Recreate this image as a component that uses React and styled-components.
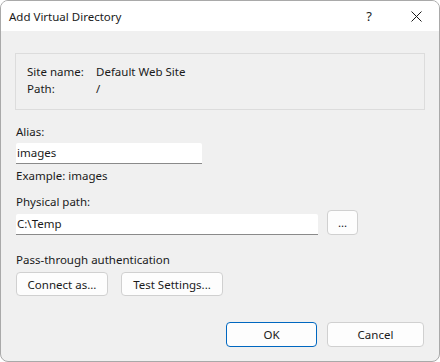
import React from 'react';
import styled, { createGlobalStyle } from 'styled-components';

const Global = createGlobalStyle`
  html, body {
    margin: 0;
    padding: 0;
    background: #ffffff;
  }
  * {
    box-sizing: border-box;
  }
`;

function App() {
  return (
    <>
      <Global />
      <Dialog>
        <TitleBar>
          <Title>Add Virtual Directory</Title>
          <Help>?</Help>
          <CloseBtn>
            <svg width="11" height="11" viewBox="0 0 11 11">
              <path d="M0.5 0.5 L10.5 10.5 M10.5 0.5 L0.5 10.5" stroke="#1a1a1a" strokeWidth="1" fill="none" />
            </svg>
          </CloseBtn>
        </TitleBar>
        <Body>
          <InfoBox>
            <InfoRow>
              <InfoKey>Site name:</InfoKey>
              <span>Default Web Site</span>
            </InfoRow>
            <InfoRow>
              <InfoKey>Path:</InfoKey>
              <span>/</span>
            </InfoRow>
          </InfoBox>

          <Label $top={13}>Alias:</Label>
          <TextBox $width={186} defaultValue="images" />
          <Label $top={3}>Example: images</Label>

          <Label $top={9}>Physical path:</Label>
          <PathRow>
            <TextBox $width={302} defaultValue="C:\Temp" />
            <Button $width={31} $height={25}>...</Button>
          </PathRow>

          <Label $top={16}>Pass-through authentication</Label>
          <ButtonRow>
            <Button $width={92}>Connect as...</Button>
            <Button $width={102}>Test Settings...</Button>
          </ButtonRow>

          <Footer>
            <Button $width={91} $height={25} $primary>OK</Button>
            <Button $width={97} $height={25}>Cancel</Button>
          </Footer>
        </Body>
      </Dialog>
    </>
  );
}

export default App;

const Dialog = styled.div`
  width: 440px;
  height: 362px;
  border: 1px solid #a9a9a9;
  border-radius: 8px;
  overflow: hidden;
  background: #f0f0f0;
  display: flex;
  flex-direction: column;
  font-family: 'Segoe UI', 'Noto Sans', sans-serif;
  font-size: 11.5px;
  color: #1a1a1a;
`;

const TitleBar = styled.div`
  height: 30px;
  background: #ffffff;
  display: flex;
  align-items: center;
  padding: 0 0 0 8px;
`;

const Title = styled.div`
  flex: 1;
  color: #1a1a1a;
`;

const Help = styled.div`
  width: 46px;
  text-align: center;
  font-size: 13px;
  margin-left: 2px;
`;

const CloseBtn = styled.div`
  width: 46px;
  display: flex;
  justify-content: center;
  align-items: center;
  margin-left: 1px;
`;

const Body = styled.div`
  flex: 1;
  padding: 22px 15px 0 15px;
  display: flex;
  flex-direction: column;
  align-items: flex-start;
`;

const InfoBox = styled.div`
  align-self: stretch;
  margin: 0 -1px;
  height: 57px;
  border: 1px solid #dcdcdc;
  padding: 9px 11px;
`;

const InfoRow = styled.div`
  display: flex;
  line-height: 17px;
`;

const InfoKey = styled.span`
  width: 69px;
`;

const Label = styled.div`
  margin-top: ${(p) => p.$top}px;
  line-height: 17px;
`;

const TextBox = styled.input`
  width: ${(p) => p.$width}px;
  height: 21px;
  margin-top: 3px;
  border: none;
  border-bottom: 1px solid #8a8a8a;
  border-radius: 2px 2px 0 0;
  background: #ffffff;
  padding: 0 1px 1px;
  font-family: inherit;
  font-size: 11.5px;
  color: #1a1a1a;
  outline: none;
`;

const PathRow = styled.div`
  display: flex;
  align-items: center;
  gap: 9px;
`;

const ButtonRow = styled.div`
  display: flex;
  gap: 13px;
  margin-top: 4px;
`;

const Footer = styled.div`
  align-self: flex-end;
  display: flex;
  gap: 10px;
  margin-top: 26px;
`;

const Button = styled.button`
  width: ${(p) => p.$width}px;
  height: ${(p) => p.$height || 24}px;
  background: #fdfdfd;
  border: 1px solid ${(p) => (p.$primary ? '#0067c0' : '#d0d0d0')};
  border-radius: 4px;
  font-family: inherit;
  font-size: 11.5px;
  color: #1a1a1a;
  padding: 0;
`;
